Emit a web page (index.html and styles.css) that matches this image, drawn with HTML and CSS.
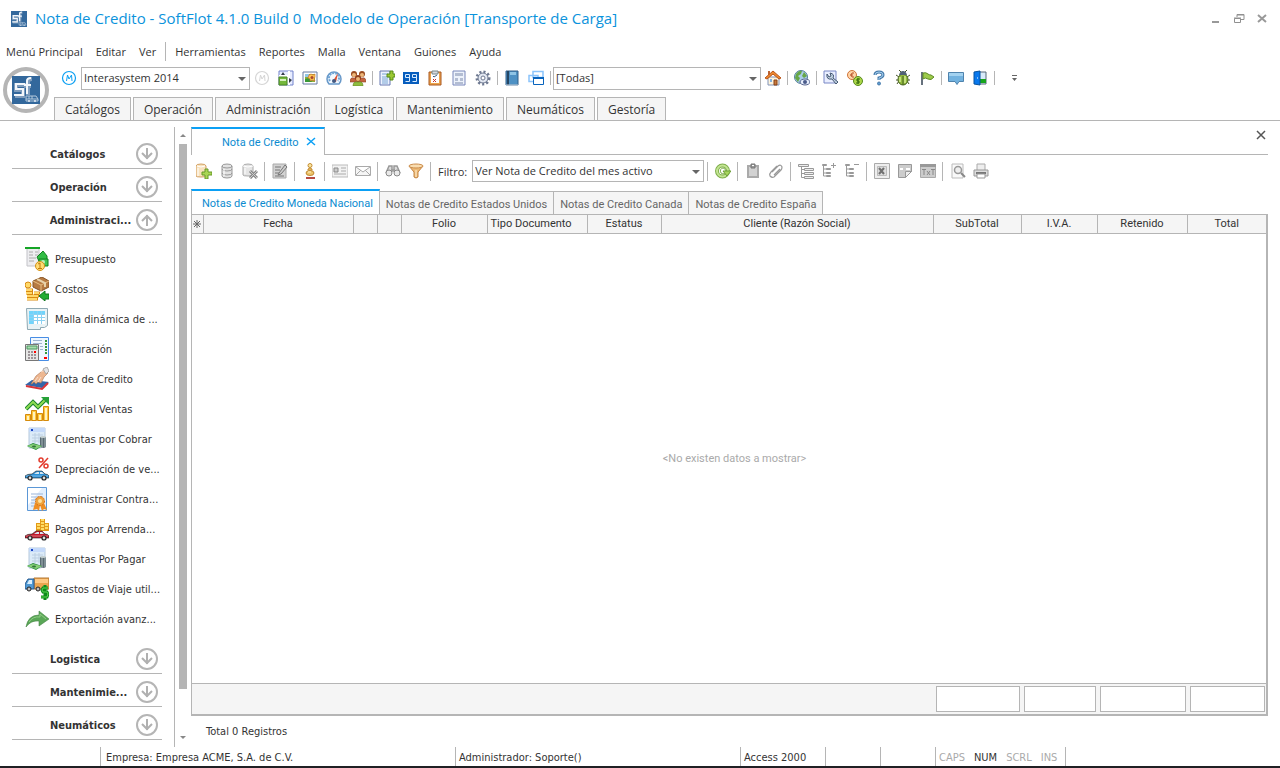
FILE: index.html
```html
<!DOCTYPE html>
<html lang="es">
<head>
    <meta charset="UTF-8">
    <meta name="viewport" content="width=device-width, initial-scale=1.0">
    <title>Nota de Credito - SoftFlot 4.1.0</title>
    <link rel="stylesheet" href="styles.css">
</head>
<body>
    <!-- Shared symbols -->
    <svg class="symbols" aria-hidden="true">
        <symbol id="logo" viewBox="0 0 28 28">
            <path d="M0 0h28v28H0z" fill="#33689c"/>
            <path d="M14 9H4v5h7v6H3M16 19V6q0-3 4-3M12 10h7" fill="none" stroke="#7f9dbd" stroke-width="4"/>
            <path d="M13 8H4v5h7v6H2M15 18V5q0-3 4-3M12 9h7" fill="none" stroke="#f3f7fb" stroke-width="2"/>
            <path d="M14 20h10l2 3v2H14z" fill="#33689c" stroke="#b5c9dc"/>
            <path d="M17 20v3M20 20v3M14 23h12" stroke="#b5c9dc"/>
            <circle cx="17" cy="25" r="1" fill="#e5edf5"/><circle cx="23" cy="25" r="1" fill="#e5edf5"/>
        </symbol>
        <symbol id="down" viewBox="0 0 24 24">
            <circle cx="12" cy="12" r="10" fill="none" stroke="#b5b5b5" stroke-width="2"/>
            <path d="M12 6v11M7 11l5 5 5-5" fill="none" stroke="#b0b0b0" stroke-width="2"/>
        </symbol>
        <symbol id="up" viewBox="0 0 24 24">
            <circle cx="12" cy="12" r="10" fill="none" stroke="#b5b5b5" stroke-width="2"/>
            <path d="M12 18V7M7 13l5-5 5 5" fill="none" stroke="#b0b0b0" stroke-width="2"/>
        </symbol>
        <symbol id="m" viewBox="0 0 16 16">
            <circle cx="8" cy="8" r="6.5" fill="none" stroke="currentColor" stroke-width="1.2"/>
            <path d="M5.500 11l1-6L8 9l2.500-4 .5 6" fill="none" stroke="currentColor"/>
        </symbol>
        <symbol id="db" viewBox="0 0 16 16">
            <path d="M3 3v10q0 2 5 2t5-2V3q0-2-5-2T3 3z" fill="#e2e2e2" stroke="#999"/>
            <path d="M3 3q0 2 5 2t5-2M3 6q0 2 5 2t5-2M3 10q0 2 5 2t5-2" fill="none" stroke="#999"/>
            <path d="M5 6v7" stroke="#fff"/>
        </symbol>
        <symbol id="car" viewBox="0 0 24 12">
            <path d="M0 9V7q2-2 7-2l4-3h6l3 3q3 0 4 2v2z" fill="currentColor" stroke="#222" stroke-width=".6"/>
            <path d="M9 5l3-2h2v2zM15 3h2l2 2h-4z" fill="#d7e6ef"/>
            <path d="M1 7h22" stroke="#fff" stroke-opacity=".4"/>
            <circle cx="5" cy="9" r="2" fill="#ddd" stroke="#222" stroke-width="1.2"/>
            <circle cx="19" cy="9" r="2" fill="#ddd" stroke="#222" stroke-width="1.2"/>
        </symbol>
        <symbol id="report" viewBox="0 0 24 24">
            <path d="M4 1h16v17q-2 3-5 3H4z" fill="#dcebf8" stroke="#b4c8dc"/>
            <path d="M4 1h16v4H4z" fill="#c5dafa"/><path d="M6 2h2v2H6z" fill="#1742c4"/>
            <path d="M7 8h11M7 11h11M7 14h11M10 6v10M14 6v10" stroke="#bccfe2"/>
            <path d="M15 10v10q3 2 6 0V10z" fill="#596a72"/><path d="M17 10v11M20 10v10" stroke="#a9b7bb"/>
            <ellipse cx="18" cy="10" rx="3" ry="1" fill="#c4cfd0"/>
            <path d="M2 19l6-3 9 3-6 4z" fill="#27893b"/><path d="M2 19l6-2 9 2-6 3z" fill="#87cf78"/>
            <ellipse cx="9" cy="19.500" rx="2" ry="1" fill="#31753b"/>
        </symbol>
    </svg>

    <header class="titlebar">
        <svg class="app-icon" aria-hidden="true"><use href="#logo"/></svg>
        <h1>Nota de Credito - SoftFlot 4.1.0 Build 0&nbsp; Modelo de Operación [Transporte de Carga]</h1>
        <div class="window-controls">
            <button aria-label="Minimizar"><svg viewBox="0 0 12 12"><path d="M2 9h7" stroke="#999" stroke-width="2"/></svg></button>
            <button aria-label="Restaurar"><svg viewBox="0 0 12 12"><path d="M4 4V1.500h7v5H8M1.500 5.500h6v4h-6zM4 2h7M1 5h7" fill="none" stroke="#909090"/></svg></button>
            <button aria-label="Cerrar"><svg viewBox="0 0 12 12"><path d="M2 2l8 7M10 2L2 9" stroke="#999" stroke-width="2"/></svg></button>
        </div>
    </header>

    <nav class="menubar" aria-label="Menú">
        <a href="#">Menú Principal</a>
        <a href="#">Editar</a>
        <a href="#">Ver</a>
        <span class="sep"></span>
        <a href="#">Herramientas</a>
        <a href="#">Reportes</a>
        <a href="#">Malla</a>
        <a href="#">Ventana</a>
        <a href="#">Guiones</a>
        <a href="#">Ayuda</a>
    </nav>

    <div class="ribbon">
        <button class="logo-button" aria-label="SoftFlot"><svg aria-hidden="true"><use href="#logo"/></svg></button>
        <div class="ribbon-rows">
            <div class="toolbar" role="toolbar" aria-label="Principal">
                <button class="blue" aria-label="Modelo"><svg><use href="#m"/></svg></button>
                <span class="combo company"><select aria-label="Empresa"><option>Interasystem 2014</option></select></span>
                <button class="faded" aria-label="Modelo inactivo"><svg><use href="#m"/></svg></button>
                <button aria-label="Vista"><svg viewBox="0 0 16 16"><path d="M1 1h14v14H1z" fill="#e8edff" stroke="#7181ca"/><path d="M11 1v14M1 6h10" stroke="#fff" stroke-width="2" fill="none"/><path d="M1 7h8v8H1z" fill="#74b83b" stroke="#4c8926"/><path d="M2 9h6v2H2z" fill="#d9f0c2"/><path d="M3 5l2-3 2 3zM11 8l3 2-3 3z" fill="#333c49"/></svg></button>
                <button aria-label="Imagen"><svg viewBox="0 0 16 16"><path d="M1 2h14v12H1z" fill="#fff" stroke="#667aa0"/><path d="M3 4h10v8H3z" fill="#8fae3a"/><path d="M3 4h4v3H3z" fill="#92c7e5"/><path d="M3 9l4-1 3 4H3z" fill="#399936"/><path d="M7 5l2-1 2 1 2-1v3l-1 2 1 2-3-1-2 1V9L6 8z" fill="#ffc655" stroke="#c56829" stroke-width=".6"/><circle cx="10" cy="7.500" r="1.500" fill="#aa462d"/></svg></button>
                <button aria-label="Indicadores"><svg viewBox="0 0 16 16"><path d="M3 14a7 7 0 1 1 10 0z" fill="#f3f9ff" stroke="#6798c9" stroke-width="1.500"/><path d="M4 11a5 5 0 1 1 8 0" fill="none" stroke="#6fa4d4" stroke-width="2" stroke-dasharray="2 1"/><path d="M7 11l5-8-2 9z" fill="#e14c2c"/><circle cx="8" cy="11" r="2" fill="#425a83"/></svg></button>
                <button aria-label="Usuarios"><svg viewBox="0 0 16 16"><circle cx="4" cy="4" r="3" fill="#994b20"/><circle cx="12" cy="4" r="3" fill="#994b20"/><circle cx="4" cy="5" r="2" fill="#eeb779"/><circle cx="12" cy="5" r="2" fill="#eeb779"/><path d="M0 12q0-5 4-4 4-1 4 4zM8 12q0-5 4-4 4-1 4 4z" fill="#c5643f" stroke="#8d4327" stroke-width=".6"/><circle cx="8" cy="8" r="3" fill="#913f1b"/><circle cx="8" cy="9" r="2" fill="#efb879"/><path d="M3 16q0-5 5-4 5-1 5 4z" fill="#8fbd3f" stroke="#638127" stroke-width=".6"/></svg></button>
                <span class="sep"></span>
                <button aria-label="Agregar documento"><svg viewBox="0 0 16 16"><path d="M1 1h10v14H1z" fill="#edf2ff" stroke="#6779b2"/><path d="M3 4h6M3 7h7M3 9h6M3 11h6M3 13h6" stroke="#78a6d1"/><path d="M11 1h3v3h2v3h-2v3h-3V7H8V4h3z" fill="#9bc831" stroke="#568b1b"/></svg></button>
                <button aria-label="Consecutivos"><svg viewBox="0 0 16 16"><path d="M0 2h16v12H0z" fill="#075dbd"/><path d="M6.500 7.500h-4v-3h4v7h-4M13.500 7.500h-4v-3h4v7h-4" stroke="#d7ebff" fill="none"/></svg></button>
                <button aria-label="Tareas"><svg viewBox="0 0 16 16"><path d="M2 2h12v13H2z" fill="#eda44b" stroke="#a95823"/><path d="M4 3h8v10H4z" fill="#fff"/><path d="M5 1h6v3H5z" fill="#d5d9df" stroke="#788"/><path d="M6 6l1 1 3-2" stroke="#3a5f86" fill="none"/><path d="M6 9l3 3M9 9l-3 3" stroke="#c4312b" fill="none"/></svg></button>
                <button aria-label="Formato"><svg viewBox="0 0 16 16"><path d="M2 1h12v14H2z" fill="#edf2fb" stroke="#7887ba"/><path d="M4 3h8v3H4zM4 8h3v3H4zM9 8h3v3H9zM4 12h8v2H4z" fill="#b3bdd2"/></svg></button>
                <button aria-label="Opciones"><svg viewBox="0 0 16 16"><circle cx="8" cy="8" r="6" fill="none" stroke="#6d7890" stroke-width="3" stroke-dasharray="2 2"/><circle cx="8" cy="8" r="5" fill="#e3e8f2" stroke="#6d7890"/><circle cx="8" cy="8" r="2" fill="#fff" stroke="#6d7890"/></svg></button>
                <span class="sep"></span>
                <button aria-label="Libro"><svg viewBox="0 0 16 16"><path d="M2 1h12v14H2z" fill="#4e91c4" stroke="#315e89"/><path d="M3 1h2v14H3z" fill="#254765"/><path d="M6 2h6v3H6z" fill="#8fc4e5"/><path d="M2 15h12" stroke="#d3dce6"/></svg></button>
                <button aria-label="Ventanas"><svg viewBox="0 0 16 16"><path d="M5 1.500h10v6H5zM1 5.500h9v6H1z" fill="#fff" stroke="#8bc4fb" stroke-width="1.500"/><path d="M5.500 7.500h10v7h-10z" fill="#fff" stroke="#0763bd"/><path d="M5 7h11v2H5z" fill="#0763bd"/></svg></button>
                <span class="sep"></span>
                <span class="combo scope"><select aria-label="Ventanas abiertas"><option>[Todas]</option></select></span>
                <button aria-label="Inicio"><svg viewBox="0 0 16 16"><path d="M3 7h11v8H3z" fill="#fff4dc" stroke="#8093b8"/><path d="M9 10h3v5H9z" fill="#c7783a" stroke="#844018"/><path d="M5 9h2v3H5z" fill="#84b3df"/><path d="M3 1h2v4H3z" fill="#bc6536"/><path d="M0 8l8-7 8 7-2 1-6-5-6 5z" fill="#ee8a30" stroke="#ba5419"/></svg></button>
                <span class="sep"></span>
                <button aria-label="Mundo"><svg viewBox="0 0 16 16"><circle cx="7" cy="7" r="6.5" fill="#a9cde8" stroke="#557d9b"/><path d="M2 4q3-4 6-3L7 4 4 6l2 2-2 4L1 8zM10 2l3 4-3 2-2-2z" fill="#67a747"/><ellipse cx="11" cy="12" rx="5" ry="3" fill="#e7eefc" stroke="#596790"/><circle cx="11" cy="12" r="2" fill="#4a5b8b"/></svg></button>
                <span class="sep"></span>
                <button aria-label="Herramientas"><svg viewBox="0 0 16 16"><path d="M1 1h12v12H1z" fill="#e9eeff" stroke="#7887c5"/><path d="M4 4q-1 6 5 5l4 5 2-2-5-4q2-4-3-5l1 3-2 1z" fill="#bfd0df" stroke="#455873"/></svg></button>
                <button aria-label="Monedas"><svg viewBox="0 0 16 16"><circle cx="5" cy="5" r="4.5" fill="#ffd4a7" stroke="#cf7339"/><path d="M7 3H5L4 5l1 2h2M3 5h3" stroke="#b8532b" fill="none"/><circle cx="11" cy="11" r="4.5" fill="#acd849" stroke="#588920"/><path d="M13 9h-3v2h2v2H9M11 8v6" stroke="#35680c" fill="none"/></svg></button>
                <button aria-label="Ayuda"><svg viewBox="0 0 16 16"><path d="M4 5q0-3 4-3t4 3q0 2-4 3v2" stroke="#467aaa" stroke-width="3" fill="none"/><path d="M4 5q0-3 4-3t4 3q0 2-4 3v2" stroke="#a9d3f2" fill="none"/><circle cx="8" cy="13.500" r="1.500" fill="#5d9bd0" stroke="#467aaa"/></svg></button>
                <button aria-label="Depurar"><svg viewBox="0 0 16 16"><path d="M1 5l3 2M1 10h3M2 14l2-3M15 5l-3 2M15 10h-3M14 14l-2-3M6 2L4 0M10 2l2-2" stroke="#47542b"/><ellipse cx="8" cy="9.500" rx="5" ry="5.5" fill="#90b83c" stroke="#476320"/><path d="M4 5q1-4 4-4t4 4z" fill="#506173"/><path d="M8 6v9" stroke="#476320"/><path d="M5 7v5M10 6v7" stroke="#d5ed91" stroke-width="1.500"/></svg></button>
                <button aria-label="Bandera"><svg viewBox="0 0 16 16"><path d="M3 2v13" stroke="#66717d" stroke-width="2"/><path d="M4 3q3-1 5 1 1 1 3 1l3 2q-3 4-6 2-3-2-5 0z" fill="#9dcb4b" stroke="#5f8b26"/></svg></button>
                <span class="sep"></span>
                <button aria-label="Mensajes"><svg viewBox="0 0 16 16"><path d="M.500 2.500h15v9H11l-2 3-2-3H.500z" fill="#72b2df" stroke="#4f83ad"/><path d="M1 3h14v3H1z" fill="#a3d2f0"/></svg></button>
                <button aria-label="Salir"><svg viewBox="0 0 16 16"><path d="M7 2h7v12H7z" fill="#d8ebfa" stroke="#566878"/><path d="M8 9h6v4H8z" fill="#17a51c"/><path d="M2 2l6-1v14l-6-1z" fill="#0878ed" stroke="#07539f"/><path d="M5 8h1" stroke="#fff"/></svg></button>
                <span class="sep"></span>
                <button class="overflow" aria-label="Más botones"><svg viewBox="0 0 16 16"><path d="M5 5h5v1H5zM5 8h5L7.500 11z" fill="#666"/></svg></button>
            </div>
            <nav class="ribbon-tabs" aria-label="Módulos">
                <a href="#">Catálogos</a>
                <a href="#">Operación</a>
                <a href="#">Administración</a>
                <a href="#">Logística</a>
                <a href="#">Mantenimiento</a>
                <a href="#">Neumáticos</a>
                <a href="#">Gestoría</a>
            </nav>
        </div>
    </div>

    <main class="workspace">
        <aside class="sidebar">
            <button class="group"><span>Catálogos</span><svg><use href="#down"/></svg></button>
            <button class="group"><span>Operación</span><svg><use href="#down"/></svg></button>
            <button class="group"><span>Administraci...</span><svg><use href="#up"/></svg></button>
            <ul class="items">
                <li><a href="#"><svg viewBox="0 0 24 24"><path d="M2 1h12v18H2z" fill="#ededf0" stroke="#c3c3c8"/><path d="M0 1h15" stroke="#15a526" stroke-width="2"/><path d="M4 5h4M10 5h3M4 8h4M10 8h3M4 11h7M4 14h5" stroke="#aaa"/><path d="M12 10l6-6 4 5v5h-8z" fill="#32bd45" stroke="#10821f"/><path d="M14 12h9v7h-9z" fill="#45c654" stroke="#10821f"/><circle cx="18" cy="15" r="2" fill="#c4efbc"/><circle cx="15" cy="19" r="4.5" fill="#ffdc75" stroke="#d59115"/><path d="M13 17l2-1v5M13 21.500h4" fill="none" stroke="#c47b0b"/></svg><span>Presupuesto</span></a></li>
                <li><a href="#"><svg viewBox="0 0 24 24"><path d="M8 4l9-4 7 4v6l-8 4-8-4z" fill="#b67a42" stroke="#875426"/><path d="M8 4l8 4 8-4M16 8v6" stroke="#e8bd80" fill="none"/><path d="M12 2l8 4v4" stroke="#e8d3ab" stroke-width="2" fill="none"/><circle cx="3" cy="8" r="3" fill="#ffd969" stroke="#d88a12"/><path d="M1 13h7M1 16h7M2 19h8M2 22h11M9 16h6M9 19h5" stroke="#d88a12" stroke-width="3"/><path d="M1 13h6M1 16h6M2 19h7M2 22h10M9 16h5M9 19h4" stroke="#ffd76a" stroke-width="2"/><path d="M14 19l6-5v3h4v5h-4v2z" fill="#22ad31" stroke="#10761d"/></svg><span>Costos</span></a></li>
                <li><a href="#"><svg viewBox="0 0 24 24"><path d="M1.500 1.500h21v17l-3 2h-4v2h-13z" fill="#e8f2f5" stroke="#8fa9b3"/><path d="M4 4h16v13H4z" fill="#fff"/><path d="M4 4h16v3H4zM4 8h4v9H4z" fill="#70d4fb"/><path d="M4 7.500h16M4 10.500h16M4 13.500h16M8.500 4v13M12.500 4v13M16.500 4v13" stroke="#8ad2f3"/></svg><span>Malla dinámica de ...</span></a></li>
                <li><a href="#"><svg viewBox="0 0 24 24"><path d="M5.500.500h18v23h-18z" fill="#eff7ff" stroke="#488de4"/><path d="M8 3.500h9M8 6.500h9M15 9.500h3M15 12.500h3" stroke="#9db4d0"/><path d="M21 3v14" stroke="#38983b" stroke-width="2" stroke-dasharray="2 1"/><path d="M19 21h3" stroke="red" stroke-width="2"/><path d="M.500 7.500h13v16H.500z" fill="#e5e5e4" stroke="#777"/><path d="M2 9h10v3H2z" fill="#a8dcae" stroke="#4a9a60"/><path d="M3 15h2M6 15h2M3 18h2M6 18h2M9 18h2M3 21h2M6 21h2M9 21h2" stroke="#9c9498" stroke-width="2"/><path d="M9 15h2" stroke="red" stroke-width="2"/></svg><span>Facturación</span></a></li>
                <li><a href="#"><svg viewBox="0 0 24 24"><path d="M0 18l7-5 17 2-7 6z" fill="#3466a8"/><path d="M1 19l16 3 6-6" fill="none" stroke="#d93438" stroke-width="2"/><path d="M6 17l5-8 5-4 4-3 3 4-4 4-3 6-3-1-2 2-2-2-2 2z" fill="#edb791" stroke="#ad7351" stroke-width=".6"/><path d="M16 5l4-2M10 14l3-4M13 15l3-5" stroke="#fbe0cd"/><path d="M18 2l4-2 2 4-3 3z" fill="#e5e5e7" stroke="#aaa"/></svg><span>Nota de Credito</span></a></li>
                <li><a href="#"><svg viewBox="0 0 24 24"><path d="M.500 17.500h5v6h-5zM6.500 13.500h5v10h-5zM12.500 16.500h5v7h-5zM18.500 9.500h5v14h-5z" fill="#ffc83e" stroke="#d58b0c"/><path d="M3 19v4M9 15v8M15 18v5M21 11v12" stroke="#fff2c1" stroke-width="2"/><path d="M1 12l7-7 5 5 7-7" stroke="#15802d" stroke-width="4" fill="none"/><path d="M1 12l7-7 5 5 7-7" stroke="#8fdc53" stroke-width="2" fill="none"/><path d="M16 0h8v8z" fill="#26a137"/></svg><span>Historial Ventas</span></a></li>
                <li><a href="#"><svg><use href="#report"/></svg><span>Cuentas por Cobrar</span></a></li>
                <li><a href="#"><svg viewBox="0 0 24 24"><g color="#298fd6"><use href="#car" y="12" width="24" height="12"/></g><circle cx="16" cy="3" r="2" fill="none" stroke="#e33c2e" stroke-width="1.500"/><circle cx="21" cy="9" r="2" fill="none" stroke="#e33c2e" stroke-width="1.500"/><path d="M14 11l9-10" stroke="#e33c2e" stroke-width="1.500"/></svg><span>Depreciación de ve...</span></a></li>
                <li><a href="#"><svg viewBox="0 0 24 24"><path d="M2.500.500h19v23h-19z" fill="#e3effd" stroke="#5b97d6"/><path d="M3 1h14L3 18z" fill="#fff"/><path d="M6 7h12M6 10h12M6 13h6M6 16h4M6 19h4" stroke="#9bb5d9"/><path d="M10 16l-2 7 4-1 2 2 1-6 2 6 2-2 3 1-3-7z" fill="#ef8f24"/><circle cx="15" cy="14" r="4.500" fill="#f0a33b" stroke="#d76e16" stroke-dasharray="2 1"/><circle cx="15" cy="14" r="2" fill="#ffe09a"/></svg><span>Administrar Contra...</span></a></li>
                <li><a href="#"><svg viewBox="0 0 24 24"><path d="M11 14V6h4V2h5v4h4v8z" fill="#e39a18"/><path d="M16 3h3M16 6h3M12 8h3M12 11h3M16 9h3M16 12h3M20 8h3M20 11h3" stroke="#ffdc64" stroke-width="2"/><g color="#c3192b"><use href="#car" y="12" width="24" height="12"/></g></svg><span>Pagos por Arrenda...</span></a></li>
                <li><a href="#"><svg><use href="#report"/></svg><span>Cuentas Por Pagar</span></a></li>
                <li><a href="#"><svg viewBox="0 0 24 24"><path d="M9 1h15v11H9z" fill="#eba550" stroke="#b47932"/><path d="M10 2h13v4H10z" fill="#ffc983"/><path d="M0 12V7l3-5h6v10z" fill="#4f98d3" stroke="#2a5c91"/><path d="M2 7l2-4h3v4H2z" fill="#d9efff"/><circle cx="4" cy="12" r="2" fill="#bbb" stroke="#222"/><circle cx="13" cy="12" r="2" fill="#bbb" stroke="#222"/><path d="M23 11h-5l-1 2 1 2h4l1 2-1 3h-6M20 8v15" stroke="#0c8b1a" stroke-width="3" fill="none"/><path d="M23 11h-5l-1 2 1 2h4l1 2-1 3h-6" stroke="#5bd552" fill="none"/></svg><span>Gastos de Viaje util...</span></a></li>
                <li><a href="#"><svg viewBox="0 0 24 24"><path d="M1 20Q3 8 14 8V4l10 8-10 7v-5Q6 13 1 20z" fill="#5aa757" stroke="#468547" stroke-width=".6"/><path d="M4 15q4-6 11-5V7l6 5" stroke="#91cc86" fill="none"/></svg><span>Exportación avanz...</span></a></li>
            </ul>
            <button class="group"><span>Logistica</span><svg><use href="#down"/></svg></button>
            <button class="group"><span>Mantenimie...</span><svg><use href="#down"/></svg></button>
            <button class="group"><span>Neumáticos</span><svg><use href="#down"/></svg></button>
        </aside>
        <div class="scrollbar">
            <button aria-label="Subir"><svg viewBox="0 0 8 8"><path d="M1 5l3-3 3 3z" fill="#888"/></svg></button>
            <div class="track"><div class="thumb"></div></div>
            <button aria-label="Bajar"><svg viewBox="0 0 8 8"><path d="M1 1l3 3 3-3z" fill="#888"/></svg></button>
        </div>

        <section class="document">
            <div class="doc-tabs">
                <div class="doc-tab">
                    <a href="#">Nota de Credito</a>
                    <button aria-label="Cerrar pestaña"><svg viewBox="0 0 10 10"><path d="M1 1l8 7M9 1L1 8" stroke="#0ba0f5" stroke-width="1.500"/></svg></button>
                </div>
                <div class="doc-close"><button aria-label="Cerrar documento"><svg viewBox="0 0 10 10"><path d="M1 1l8 8M9 1L1 9" stroke="#555" stroke-width="1.500"/></svg></button></div>
            </div>

            <div class="toolbar doc-toolbar" role="toolbar" aria-label="Documento">
                <button aria-label="Nuevo"><svg viewBox="0 0 16 16"><path d="M0 3v10q0 1 5 1t5-1V3q0-2-5-2T0 3z" fill="#f8e2bd" stroke="#d3a063"/><path d="M1 3q4 2 8 0M2 5v8" stroke="#fff" fill="none"/><path d="M9 6h3v3h4v3h-4v4H9v-4H6V9h3z" fill="#a9d554" stroke="#679927"/></svg></button>
                <button aria-label="Guardar"><svg><use href="#db"/></svg></button>
                <button aria-label="Borrar"><svg viewBox="0 0 16 16"><path d="M1 3v9q0 1 5 1t5-1V3q0-2-5-2T1 3z" fill="#e5e5e5" stroke="#aaa"/><path d="M1 3q5 2 10 0M3 5v6" stroke="#fff" fill="none"/><path d="M8 8l7 7M15 8l-7 7" stroke="#888" stroke-width="3"/><path d="M8 8l7 7M15 8l-7 7" stroke="#ccc"/></svg></button>
                <span class="sep"></span>
                <button aria-label="Editar"><svg viewBox="0 0 16 16"><path d="M1 1h13v14H1z" fill="#d2d2d2" stroke="#aaa"/><path d="M3 4h6M3 7h5M3 10h4M3 13h9" stroke="#777"/><path d="M7 10l6-8 2 2-6 7-3 1z" fill="#ccc" stroke="#777"/></svg></button>
                <span class="sep"></span>
                <button aria-label="Timbrar"><svg viewBox="0 0 16 16"><circle cx="8" cy="2.500" r="2" fill="#f8e6a0" stroke="#c58b31"/><path d="M6 6q2-2 4 0v1H6z" fill="#f6dd8a" stroke="#c58b31"/><ellipse cx="8" cy="10" rx="4" ry="2.500" fill="#edc56b" stroke="#bf8731"/><path d="M6 9h3" stroke="#fff6c8"/><path d="M4 15h9" stroke="#b64b42" stroke-width="2"/></svg></button>
                <span class="sep"></span>
                <button aria-label="Contacto"><svg viewBox="0 0 16 16"><path d="M0 2h16v12H0z" fill="#f2f2f2" stroke="#bbb"/><path d="M2 5h4v4H2z" fill="#ccc" stroke="#888"/><path d="M9 5h5M9 8h5M2 11h12" stroke="#aaa"/></svg></button>
                <button aria-label="Correo"><svg viewBox="0 0 16 16"><path d="M.500 3.500h15v9H.500zM1 4l7 5 7-5M1 12l5-5M15 12l-5-5" fill="#f5f5f5" stroke="#aaa"/></svg></button>
                <span class="sep"></span>
                <button aria-label="Buscar"><svg viewBox="0 0 16 16"><path d="M1 10l3-7h3v6M15 10l-3-7H9v6M6 7h4" fill="#ddd" stroke="#999" stroke-width="1.500"/><circle cx="4" cy="10" r="3" fill="#e9e9e9" stroke="#888"/><circle cx="12" cy="10" r="3" fill="#e9e9e9" stroke="#888"/></svg></button>
                <button aria-label="Filtrar"><svg viewBox="0 0 16 16"><path d="M1 3l5 6v5q2 2 4 0V9l5-6z" fill="#edba76" stroke="#c38443"/><ellipse cx="8" cy="3" rx="7" ry="2" fill="#f9ddb0" stroke="#cb8c4b"/><path d="M8 7v7" stroke="#fff0d4"/></svg></button>
                <span class="sep"></span>
                <label for="filtro">Filtro:</label>
                <span class="combo filter"><select id="filtro"><option>Ver Nota de Credito del mes activo</option></select></span>
                <span class="sep"></span>
                <button aria-label="Actualizar"><svg viewBox="0 0 16 16"><circle cx="7.500" cy="8" r="5.500" fill="none" stroke="#7fae4c" stroke-width="4"/><circle cx="7.500" cy="8" r="5.500" fill="none" stroke="#c3e592" stroke-width="2"/><path d="M10 10q-2 2-4 0-2-4 2-5 2 0 3 3" fill="none" stroke="#7fae4c"/><path d="M8 8h8l-4 5z" fill="#a8d65e" stroke="#6d9f37"/></svg></button>
                <span class="sep"></span>
                <button aria-label="Pegar"><svg viewBox="0 0 16 16"><path d="M2 2h12v13H2z" fill="#aaa"/><path d="M4 4h8v9H4z" fill="#d2d2d2"/><path d="M6 1h4v4H6z" fill="#999" stroke="#777"/><path d="M7 2h2v1H7z" fill="#fff"/></svg></button>
                <button aria-label="Adjuntar"><svg viewBox="0 0 16 16"><path d="M4 9l6-6q3-2 4 1 0 2-1 3l-7 7q-2 1-4-1-1-2 1-4l6-6M6 12l6-6" fill="none" stroke="#999" stroke-width="1.200"/></svg></button>
                <span class="sep"></span>
                <button aria-label="Agrupar"><svg viewBox="0 0 16 16"><path d="M.500 1.500h10v2H.500zM6.500 5.500h9v2h-9zM6.500 9.500h9v2h-9zM6.500 13.500h9v2h-9z" fill="#eee" stroke="#999"/><path d="M3.500 4v10.500h3M3 6.500h3M3 10.500h3" stroke="#999" fill="none"/></svg></button>
                <button aria-label="Expandir"><svg viewBox="0 0 16 16"><path d="M1.500 1.500h4v1h-4zM5.500 5.500h4v1h-4zM5.500 9.500h4v1h-4zM5.500 12.500h4v1h-4z" fill="#ddd" stroke="#999"/><path d="M2.500 3v10h3M3 6h3M3 10h3M10 2.500h5M12.500 0v5" stroke="#999" fill="none"/></svg></button>
                <button aria-label="Contraer"><svg viewBox="0 0 16 16"><path d="M1.500 1.500h4v1h-4zM5.500 5.500h4v1h-4zM5.500 9.500h4v1h-4zM5.500 12.500h4v1h-4z" fill="#ddd" stroke="#999"/><path d="M2.500 3v10h3M3 6h3M3 10h3M10 1.500h5" stroke="#999" fill="none"/></svg></button>
                <span class="sep"></span>
                <button aria-label="Excel"><svg viewBox="0 0 16 16"><path d="M.500.500h15v15H.500z" fill="#eee" stroke="#aaa"/><path d="M3.500 3.500h9v9h-9z" fill="#ddd" stroke="#bbb"/><path d="M5 5l5 6M10 5l-5 6" stroke="#707070" stroke-width="2"/></svg></button>
                <button aria-label="Exportar"><svg viewBox="0 0 16 16"><path d="M1.500 1.500h13v7l-6 6h-7z" fill="#ccc" stroke="#999"/><path d="M3 6h3M9 6h4" stroke="#fff" stroke-width="2"/><path d="M8.500 14.500v-6h6z" fill="#eee" stroke="#999"/></svg></button>
                <button aria-label="Texto"><svg viewBox="0 0 16 16"><path d="M.500 1.500h15v13H.500z" fill="#ccc" stroke="#aaa"/><path d="M0 1h16v3H0z" fill="#999"/><path d="M2 6.500h4M4 7v5M7 8l3 4M10 8l-3 4M11 6.500h4M13 7v5" stroke="#888"/></svg></button>
                <span class="sep"></span>
                <button aria-label="Vista previa"><svg viewBox="0 0 16 16"><path d="M2 1h11v14H2z" fill="#f9f9f9" stroke="#bbb"/><circle cx="8" cy="7" r="3.500" fill="#eee" stroke="#999" stroke-width="1.500"/><path d="M11 10l4 4" stroke="#888" stroke-width="2"/></svg></button>
                <button aria-label="Imprimir"><svg viewBox="0 0 16 16"><path d="M4 1h8v7H4z" fill="#eee" stroke="#aaa"/><path d="M1 7h14v6H1z" fill="#ddd" stroke="#999"/><path d="M3 10h10" stroke="#777" stroke-width="2"/><path d="M4 11h8v4H4z" fill="#fff" stroke="#999"/></svg></button>
            </div>

            <nav class="grid-tabs" aria-label="Monedas">
                <a class="active" href="#">Notas de Credito Moneda Nacional</a>
                <a href="#">Notas de Credito Estados Unidos</a>
                <a href="#">Notas de Credito Canada</a>
                <a href="#">Notas de Credito España</a>
            </nav>

            <div class="grid">
                <table>
                    <colgroup>
                        <col class="w-mark"><col class="w-fecha"><col class="w-flag"><col class="w-flag"><col class="w-folio"><col class="w-tipo">
                        <col class="w-estatus"><col><col class="w-subtotal"><col class="w-iva"><col class="w-retenido"><col class="w-total">
                    </colgroup>
                    <thead>
                        <tr>
                            <th><svg class="star" viewBox="0 0 8 8"><path d="M4 0v8M0 4h8M1 1l6 6M7 1L1 7" stroke="#666"/></svg></th>
                            <th>Fecha</th>
                            <th></th>
                            <th></th>
                            <th>Folio</th>
                            <th class="left">Tipo Documento</th>
                            <th>Estatus</th>
                            <th>Cliente (Razón Social)</th>
                            <th>SubTotal</th>
                            <th>I.V.A.</th>
                            <th>Retenido</th>
                            <th>Total</th>
                        </tr>
                    </thead>
                    <tbody>
                        <tr>
                            <td></td>
                            <td class="empty" colspan="11">&lt;No existen datos a mostrar&gt;</td>
                        </tr>
                    </tbody>
                    <tfoot>
                        <tr>
                            <td colspan="8"></td>
                            <td><input aria-label="Suma SubTotal" readonly></td>
                            <td><input aria-label="Suma I.V.A." readonly></td>
                            <td><input aria-label="Suma Retenido" readonly></td>
                            <td><input aria-label="Suma Total" readonly></td>
                        </tr>
                    </tfoot>
                </table>
            </div>
            <p class="count">Total 0 Registros</p>
        </section>
    </main>

    <footer class="statusbar">
        <span class="cell blank"></span>
        <span class="cell empresa">Empresa: Empresa ACME, S.A. de C.V.</span>
        <span class="cell usuario">Administrador: Soporte()</span>
        <span class="cell base">Access 2000</span>
        <span class="cell small"></span>
        <span class="cell small"></span>
        <span class="cell keys"><span>CAPS</span><span class="on">NUM</span><span>SCRL</span><span>INS</span></span>
    </footer>
</body>
</html>
```
FILE: styles.css
```css
* {
    margin: 0;
    padding: 0;
    box-sizing: border-box;
}

body {
    font-family: 'Open Sans', 'Noto Sans', sans-serif;
    font-size: 12px;
    color: #333;
    background: #fff;
    height: 100vh;
    display: flex;
    flex-direction: column;
    overflow: hidden;
}

a {
    color: inherit;
    text-decoration: none;
}

button {
    background: none;
    border: none;
    font: inherit;
    color: inherit;
    display: flex;
    align-items: center;
    justify-content: center;
}

.symbols {
    display: none;
}

/* Title bar */
.titlebar {
    display: flex;
    align-items: center;
    height: 37px;
    padding: 0 12px 0 11px;
}

.app-icon {
    width: 16px;
    height: 16px;
    margin-right: 8px;
}

h1 {
    flex: 1;
    font-size: 15px;
    font-weight: 400;
    line-height: 20px;
    padding-bottom: 1px;
    color: #0b93dc;
    white-space: nowrap;
}

.window-controls {
    display: flex;
    gap: 11px;
}

.window-controls svg {
    width: 12px;
    height: 12px;
}

/* Menu */
.menubar {
    display: flex;
    align-items: center;
    gap: 13px;
    height: 29px;
    padding-left: 6px;
    font-size: 11px;
}

.sep {
    flex: none;
    width: 1px;
    height: 14px;
    margin: 0 2px;
    background: #b5b5b5;
}

.menubar .sep {
    height: 19px;
    margin: 0 -4px;
}

/* Ribbon */
.ribbon {
    display: flex;
    border-bottom: 1px solid #b5b5b5;
}

.logo-button {
    flex: none;
    width: 46px;
    height: 46px;
    margin: 1px 5px 0 3px;
    border: 4px solid #b5b5b5;
    border-radius: 50%;
}

.logo-button svg {
    flex: none;
    width: 28px;
    height: 28px;
}

.ribbon-rows {
    flex: 1;
}

.toolbar {
    display: flex;
    align-items: center;
    height: 24px;
    padding-left: 3px;
}

.toolbar button {
    flex: none;
    width: 24px;
    height: 24px;
}

.toolbar svg {
    width: 16px;
    height: 16px;
}

.toolbar .blue {
    color: #0b9ff2;
}

.toolbar .faded {
    color: #d5d5d5;
}

.toolbar .overflow {
    margin-left: 6px;
}

.combo {
    flex: none;
    position: relative;
    height: 23px;
}

.combo::after {
    content: "";
    position: absolute;
    right: 4px;
    top: 10px;
    border: 4px solid transparent;
    border-top-color: #666;
    border-bottom: none;
    pointer-events: none;
}

.combo select {
    appearance: none;
    width: 100%;
    height: 100%;
    padding: 0 16px 2px 2px;
    border: 1px solid #b5b5b5;
    border-radius: 0;
    background: #fff;
    color: #333;
    font-family: inherit;
    font-size: 11px;
}

.company {
    width: 169px;
}

.scope {
    width: 208px;
}

.ribbon-tabs {
    display: flex;
    gap: 2px;
    margin-top: 7px;
}

.ribbon-tabs a {
    height: 23px;
    padding: 0 10px;
    line-height: 24px;
    border: 1px solid #b5b5b5;
    border-bottom: none;
    background: #f5f5f5;
}

/* Work area */
.workspace {
    flex: 1;
    display: flex;
    min-height: 0;
    padding-top: 6px;
}

.sidebar {
    flex: none;
    width: 175px;
    padding: 9px 12px 0;
    border-right: 1px solid #b5b5b5;
    overflow: hidden;
    font-family: 'DejaVu Sans Condensed', 'DejaVu Sans', sans-serif;
    font-size: 11px;
}

.group {
    width: 150px;
    height: 33px;
    padding: 4px 3px 0 38px;
    border-bottom: 1px solid #b5b5b5;
    font-weight: 700;
    text-align: left;
}

.group span {
    flex: 1;
    white-space: nowrap;
}

.group svg {
    flex: none;
    width: 24px;
    height: 24px;
    margin-left: 4px;
}

.items {
    list-style: none;
    margin: 9px 0 7px;
}

.items a {
    display: flex;
    align-items: center;
    gap: 6px;
    height: 30px;
    padding-left: 13px;
    white-space: nowrap;
}

.items svg {
    flex: none;
    width: 24px;
    height: 24px;
}

.scrollbar {
    flex: none;
    display: flex;
    flex-direction: column;
    align-items: center;
    width: 16px;
}

.scrollbar button {
    width: 8px;
    height: 17px;
}

.scrollbar svg {
    width: 8px;
    height: 8px;
}

.track {
    flex: 1;
    width: 8px;
}

.thumb {
    height: 93%;
    background: #b5b5b5;
}

/* Document */
.document {
    flex: 1;
    min-width: 0;
    display: flex;
    flex-direction: column;
    padding-right: 12px;
    font-family: Roboto, 'Liberation Sans', sans-serif;
    font-size: 11px;
}

.doc-tabs {
    display: flex;
}

.doc-tab {
    display: flex;
    align-items: center;
    gap: 8px;
    height: 28px;
    padding: 0 8px 0 30px;
    border: 1px solid #b5b5b5;
    border-top: 2px solid #0ba0f5;
    border-bottom: none;
    color: #0b8bd0;
}

.doc-tab svg,
.doc-close svg {
    width: 10px;
    height: 10px;
}

.doc-close {
    flex: 1;
    display: flex;
    align-items: flex-start;
    justify-content: flex-end;
    padding: 3px 2px 0 0;
    border-bottom: 1px solid #b5b5b5;
}

.doc-toolbar {
    height: 32px;
    padding-left: 1px;
    font-family: 'Open Sans', 'Noto Sans', sans-serif;
}

.doc-toolbar button {
    width: 23px;
}

.doc-toolbar .sep {
    height: 19px;
    margin: 0 3px;
}

.doc-toolbar label {
    margin: 0 5px 0 4px;
}

.filter {
    width: 232px;
    height: 22px;
}

.grid-tabs {
    display: flex;
    align-items: flex-end;
    height: 27px;
    color: #666;
}

.grid-tabs a {
    height: 23px;
    padding: 0 6px;
    line-height: 25px;
    border: 1px solid #b5b5b5;
    border-left-width: 0;
    border-bottom: none;
    background: #f5f5f5;
}

.grid-tabs .active {
    height: 25px;
    padding: 0 6px 0 10px;
    border-left-width: 1px;
    border-top: 2px solid #0ba0f5;
    background: #fff;
    color: #0b8bd0;
}

.grid {
    flex: 1;
    min-height: 0;
    border: 1px solid #b5b5b5;
    border-right-width: 2px;
    border-bottom-width: 2px;
}

table {
    width: 100%;
    height: 100%;
    table-layout: fixed;
    border-collapse: collapse;
}

.w-mark { width: 11px; }
.w-fecha { width: 150px; }
.w-flag { width: 24px; }
.w-folio { width: 86px; }
.w-tipo { width: 100px; }
.w-estatus { width: 74px; }
.w-subtotal { width: 88px; }
.w-iva { width: 76px; }
.w-retenido { width: 90px; }
.w-total { width: 79px; }

th {
    height: 18px;
    font-weight: 400;
    white-space: nowrap;
    background: #f5f5f5;
    border-right: 1px solid #b5b5b5;
    border-bottom: 1px solid #b5b5b5;
}

th:last-child {
    border-right: none;
}

th.left {
    padding-left: 3px;
    text-align: left;
}

.star {
    display: block;
    width: 8px;
    height: 8px;
    margin: 0 auto;
}

.empty {
    text-align: center;
    color: #aaa;
}

tfoot td {
    height: 30px;
    padding: 2px 1px 2px 3px;
    background: #f5f5f5;
    border-top: 1px solid #b5b5b5;
}

tfoot input {
    display: block;
    width: 100%;
    height: 26px;
    border: 1px solid #b5b5b5;
    background: #fff;
}

.count {
    height: 31px;
    padding-left: 15px;
    line-height: 32px;
    font-family: 'DejaVu Sans Condensed', 'DejaVu Sans', sans-serif;
}

/* Status bar */
.statusbar {
    display: flex;
    height: 21px;
    border-bottom: 2px solid #202024;
    font-family: 'DejaVu Sans Condensed', 'DejaVu Sans', sans-serif;
    font-size: 11px;
}

.cell {
    padding-left: 5px;
    line-height: 21px;
    border-right: 1px solid #b5b5b5;
    white-space: nowrap;
}

.blank { width: 101px; }
.empresa { width: 355px; }
.usuario { width: 285px; padding-left: 3px; }
.base { width: 85px; padding-left: 3px; }
.small { width: 55px; }

.keys {
    display: flex;
    gap: 9px;
    width: 130px;
    padding-left: 3px;
    color: #aaa;
}

.keys .on {
    color: #333;
}
```
